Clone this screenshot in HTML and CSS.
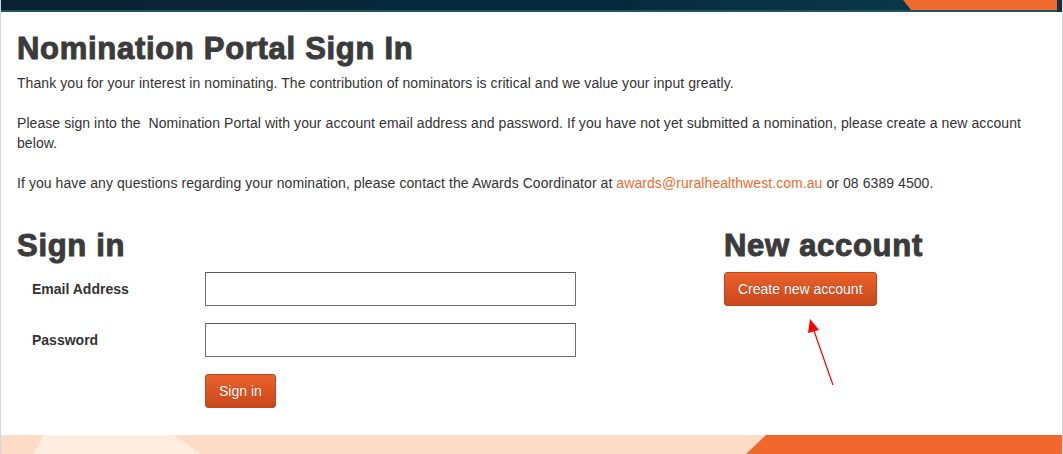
FILE: index.html
```html
<html>
	<head>
		<link rel="stylesheet" href="styles.css">
	</head>
	<body>
		<div class="page">
			<svg class="banner-top" viewBox="0 0 1061 12" preserveAspectRatio="none">
				<defs>
					<linearGradient id="navy" x1="0" x2="1" y1="0" y2="0">
						<stop offset="0" stop-color="#0a2131"/>
						<stop offset="0.5" stop-color="#062a3b"/>
						<stop offset="1" stop-color="#0a3c4d"/>
					</linearGradient>
				</defs>
				<rect x="0" y="0" width="1061" height="12" fill="url(#navy)"/>
				<polygon points="372,0 630,0 634,10 368,10" fill="#05283a"/>
				<polygon points="902,0 1056,0 1056,10 910,10" fill="#f06a2e"/>
				<rect x="0" y="10" width="1061" height="2" fill="#1e5466"/>
				<rect x="1056" y="0" width="5" height="12" fill="#0d3444"/>
			</svg>

			<div class="content">
				<h1>Nomination Portal Sign In</h1>
				<p>Thank you for your interest in nominating. The contribution of nominators is critical and we value your input greatly.</p>
				<p>Please sign into the &nbsp;Nomination Portal with your account email address and password. If you have not yet submitted a nomination, please create a new account below.</p>
				<p>If you have any questions regarding your nomination, please contact the Awards Coordinator at <a href="#">awards@ruralhealthwest.com.au</a> or 08 6389 4500.</p>

				<div class="columns">
					<div class="signin">
						<h2>Sign in</h2>
						<form class="form">
							<label for="email">Email Address</label>
							<input id="email" type="text">
							<label for="password">Password</label>
							<input id="password" type="password">
							<span></span>
							<div><button type="button" class="btn">Sign in</button></div>
						</form>
					</div>
					<div class="newaccount">
						<h2>New account</h2>
						<button type="button" class="btn">Create new account</button>
					</div>
				</div>
			</div>

			<svg class="banner-bottom" viewBox="0 0 1061 19" preserveAspectRatio="none">
				<rect x="0" y="0" width="1061" height="19" fill="#fcdcc7"/>
				<polygon points="43,0 173,0 200,19 32,19" fill="#fdeee1"/>
				<polygon points="765,0 1061,0 1061,19 745,19" fill="#f0682d"/>
			</svg>

			<svg class="arrow" width="40" height="70" viewBox="0 0 40 70">
				<line x1="33" y1="67" x2="13" y2="10" stroke="#ff0000" stroke-width="1.2"/>
				<polygon points="10,1 8,15 19,12" fill="#ff0000"/>
			</svg>
		</div>
	</body>
</html>
```

FILE: styles.css
```css
* {
	box-sizing: border-box;
	margin: 0;
	padding: 0;
}
html, body {
	background-color: #d6d6d6;
	font-family: "Liberation Sans", Arial, sans-serif;
	color: #333;
	overflow: hidden;
}
.page {
	position: relative;
	background-color: white;
	margin: 0 1px 0 1px;
	height: 454px;
	display: flex;
	flex-direction: column;
}
.banner-top {
	display: block;
	width: 100%;
	height: 12px;
}
.content {
	flex: 1;
	padding: 19px 16px 0 16px;
}
h1, h2 {
	font-size: 31px;
	line-height: 36px;
	font-weight: bold;
	color: #3b3b3b;
	-webkit-text-stroke: 1px #3b3b3b;
	letter-spacing: 0.7px;
}
h1 {
	margin-bottom: 6px;
}
p {
	font-size: 14px;
	line-height: 20px;
	letter-spacing: 0.07px;
	margin-bottom: 20px;
}
a {
	color: #f06a2e;
	text-decoration: none;
}
.columns {
	display: grid;
	grid-template-columns: 707px 1fr;
	margin-top: 37px;
}
h2 {
	line-height: 32px;
	margin-bottom: 10px;
}
.form {
	display: grid;
	grid-template-columns: 188px 371px;
	row-gap: 17px;
	align-items: center;
}
.form label {
	font-size: 14px;
	font-weight: bold;
	padding-left: 15px;
}
.form input {
	height: 34px;
	border: 1px solid #6f6f6f;
	border-top-color: #5a5a5a;
	font-size: 14px;
	padding: 0 6px;
}
.btn {
	height: 34px;
	padding: 0 13px;
	font-family: "Liberation Sans", Arial, sans-serif;
	font-size: 14px;
	color: white;
	background: linear-gradient(#e9622b, #c9471b);
	border: 1px solid #b9471f;
	border-radius: 3px;
	text-shadow: 0 0 1px rgba(0, 0, 0, 0.3);
	cursor: pointer;
}
.banner-bottom {
	display: block;
	width: 100%;
	height: 19px;
}
.arrow {
	position: absolute;
	left: 799px;
	top: 318px;
}
```
